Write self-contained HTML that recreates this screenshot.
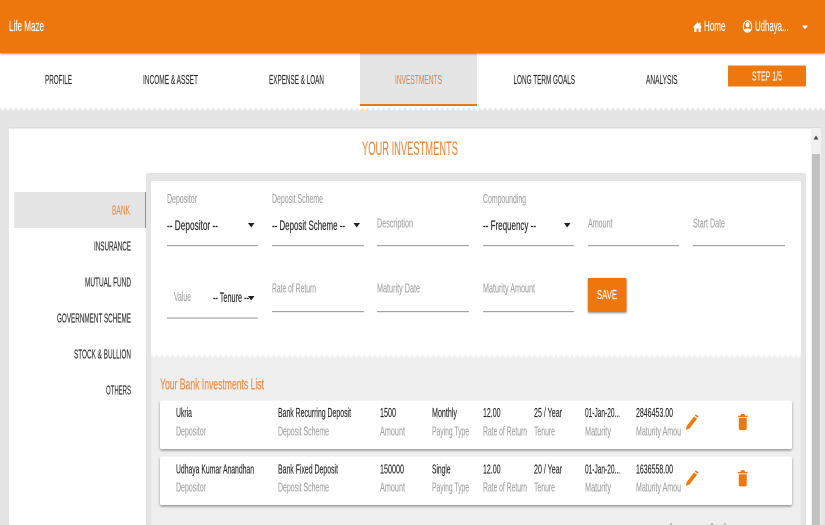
<!DOCTYPE html>
<html><head><meta charset="utf-8"><title>Life Maze</title>
<style>
html,body{margin:0;padding:0;width:825px;height:525px;overflow:hidden;background:#e5e5e5}
svg{display:block;font-family:"Liberation Sans",sans-serif}
text{font-size:12px;fill:#333}
.n{font-size:13px;fill:#2e2e2e;stroke:#2e2e2e;stroke-width:.15}
.o{fill:#f0853a;stroke:#f0853a;stroke-width:.1}
.l{fill:#a0a0a0;font-size:12.800px;stroke:#a0a0a0;stroke-width:.1}
.v{fill:#2a2a2a;font-size:12.800px;stroke:#2a2a2a;stroke-width:.15}
.s{font-size:14px}
.w{fill:#fff;stroke:#fff;stroke-width:.15}
.h{font-size:14.500px}
</style></head><body>
<svg width="825" height="525" viewBox="0 0 825 525" xmlns="http://www.w3.org/2000/svg">
<defs>
<pattern id="z" width="5.33" height="4" patternUnits="userSpaceOnUse" x="0" y="107"><path d="M0 0H5.33V.5L2.67 4 0 .5Z" fill="#fff"/></pattern>
<pattern id="z2" width="5.33" height="4" patternUnits="userSpaceOnUse" x="151" y="354"><path d="M0 0H5.33V.5L2.67 4 0 .5Z" fill="#fff"/></pattern>
<filter id="s" x="-5%" y="-20%" width="110%" height="140%"><feDropShadow dx="0" dy="1" stdDeviation="1.1" flood-color="#000" flood-opacity=".45"/></filter>
<filter id="s2" x="-5%" y="-5%" width="110%" height="130%"><feDropShadow dx="0" dy="1.5" stdDeviation="1.3" flood-color="#000" flood-opacity=".4"/></filter>
</defs>
<rect width="825" height="525" fill="#e5e5e5"/>
<!-- nav -->
<rect y="53" width="825" height="54" fill="#fff"/>
<rect y="107" width="825" height="4" fill="url(#z)"/>
<rect x="360" y="53" width="117" height="51" fill="#e5e5e5"/>
<rect x="360" y="104" width="117" height="2" fill="#ee770e"/>
<!-- header -->
<rect width="825" height="53" fill="#ee770e" filter="url(#s)"/>
<text x="9" y="31" class="w h" textLength="35" lengthAdjust="spacingAndGlyphs">Life Maze</text>
<path d="M693 27.500L697.500 22 699.200 24.200V22.800H700.500V25.800L702 27.500H700.700V32H698.500V28.500H696.500V32H694.300V27.500Z" fill="#fff"/>
<text x="704" y="31" class="w h" textLength="21.5" lengthAdjust="spacingAndGlyphs">Home</text>
<ellipse cx="747.500" cy="26.500" rx="4.200" ry="5.800" fill="none" stroke="#fff" stroke-width="1.100"/>
<ellipse cx="747.500" cy="24.800" rx="2" ry="2.500" fill="#fff"/><path d="M744 30Q747.500 26.500 751 30 747.500 33.300 744 30Z" fill="#fff"/>
<text x="755" y="31" class="w h" textLength="33.5" lengthAdjust="spacingAndGlyphs">Udhaya...</text>
<path d="M802 25.500H808L805 29.500Z" fill="#fff"/>
<!-- nav text -->
<text x="45" y="84" class="n" textLength="27" lengthAdjust="spacingAndGlyphs">PROFILE</text>
<text x="143" y="84" class="n" textLength="55" lengthAdjust="spacingAndGlyphs">INCOME &amp; ASSET</text>
<text x="269" y="84" class="n" textLength="55" lengthAdjust="spacingAndGlyphs">EXPENSE &amp; LOAN</text>
<text x="395" y="84" class="n o" textLength="47" lengthAdjust="spacingAndGlyphs">INVESTMENTS</text>
<text x="513.5" y="84" class="n" textLength="61.5" lengthAdjust="spacingAndGlyphs">LONG TERM GOALS</text>
<text x="646" y="84" class="n" textLength="31.5" lengthAdjust="spacingAndGlyphs">ANALYSIS</text>
<rect x="728" y="65.500" width="78" height="21" rx="1" fill="#ee770e"/>
<text x="752" y="80.500" class="w" style="font-size:13px" textLength="30" lengthAdjust="spacingAndGlyphs">STEP 1/5</text>
<!-- main card -->
<rect x="9" y="128" width="812" height="397" fill="#fff"/>
<path d="M9 128H821" stroke="#d8d8d8" stroke-width="1"/>
<rect x="811" y="128" width="10" height="397" fill="#f1f1f1"/>
<rect x="812" y="154" width="8" height="371" fill="#c1c1c1"/>
<path d="M813.500 139.500L816 135.500 818.500 139.500Z" fill="#505050"/>
<text x="362" y="155" class="o" style="font-size:19px" textLength="96" lengthAdjust="spacingAndGlyphs">YOUR INVESTMENTS</text>
<!-- sidebar -->
<rect x="14" y="192" width="131" height="36" fill="#e5e5e5"/>
<rect x="145" y="192" width="1" height="36" fill="#ee770e"/>
<text x="112" y="214.500" class="n o" textLength="18" lengthAdjust="spacingAndGlyphs">BANK</text>
<text x="94" y="250.500" class="n" textLength="37" lengthAdjust="spacingAndGlyphs">INSURANCE</text>
<text x="85" y="286.500" class="n" textLength="46" lengthAdjust="spacingAndGlyphs">MUTUAL FUND</text>
<text x="57" y="322.500" class="n" textLength="74" lengthAdjust="spacingAndGlyphs">GOVERNMENT SCHEME</text>
<text x="74" y="358.500" class="n" textLength="57" lengthAdjust="spacingAndGlyphs">STOCK &amp; BULLION</text>
<text x="106" y="394.500" class="n" textLength="25" lengthAdjust="spacingAndGlyphs">OTHERS</text>
<!-- panel -->
<rect x="146" y="173" width="660" height="352" fill="#e5e5e5"/>
<rect x="151" y="354" width="650" height="171" fill="#efefef"/>
<rect x="151" y="181" width="650" height="173" rx="2" fill="#fff"/>
<rect x="151" y="354" width="650" height="4" fill="url(#z2)"/>
<!-- form -->
<g fill="#a5a5a5">
<rect x="167" y="245" width="91" height="1.2"/><rect x="272" y="245" width="92" height="1.2"/><rect x="377" y="245" width="92" height="1.2"/><rect x="483" y="245" width="91" height="1.2"/><rect x="588" y="245" width="91" height="1.2"/><rect x="693" y="245" width="92" height="1.2"/>
<rect x="167" y="317.500" width="91" height="1.2"/><rect x="272" y="311" width="92" height="1.2"/><rect x="377" y="311" width="92" height="1.2"/><rect x="483" y="311" width="91" height="1.2"/>
</g>
<text x="167" y="203" class="l" textLength="30" lengthAdjust="spacingAndGlyphs">Depositor</text>
<text x="272" y="203" class="l" textLength="51" lengthAdjust="spacingAndGlyphs">Deposit Scheme</text>
<text x="483" y="203" class="l" textLength="43" lengthAdjust="spacingAndGlyphs">Compounding</text>
<text x="377" y="227.500" class="l" textLength="36" lengthAdjust="spacingAndGlyphs">Description</text>
<text x="588" y="227.500" class="l" textLength="24.500" lengthAdjust="spacingAndGlyphs">Amount</text>
<text x="693" y="227.500" class="l" textLength="32" lengthAdjust="spacingAndGlyphs">Start Date</text>
<text x="167" y="230" class="v s" textLength="51" lengthAdjust="spacingAndGlyphs">-- Depositor --</text>
<text x="272" y="230" class="v s" textLength="73" lengthAdjust="spacingAndGlyphs">-- Deposit Scheme --</text>
<text x="483" y="230" class="v s" textLength="53" lengthAdjust="spacingAndGlyphs">-- Frequency --</text>
<path d="M248 223H254.500L251.200 227.500Z" fill="#222"/>
<path d="M353.500 223H360L356.700 227.500Z" fill="#222"/>
<path d="M564 223H570.500L567.200 227.500Z" fill="#222"/>
<text x="174" y="301" class="l" textLength="17" lengthAdjust="spacingAndGlyphs">Value</text>
<text x="213" y="302" class="v s" textLength="36" lengthAdjust="spacingAndGlyphs">-- Tenure --</text>
<path d="M248 296H254.500L251.200 300.500Z" fill="#222"/>
<text x="272" y="292.500" class="l" textLength="44" lengthAdjust="spacingAndGlyphs">Rate of Return</text>
<text x="377" y="292.500" class="l" textLength="43" lengthAdjust="spacingAndGlyphs">Maturity Date</text>
<text x="483" y="292.500" class="l" textLength="52" lengthAdjust="spacingAndGlyphs">Maturity Amount</text>
<rect x="588" y="278" width="38.500" height="34" rx="1" fill="#ee770e" filter="url(#s)"/>
<text x="597" y="299" class="w" style="font-size:13px" textLength="20" lengthAdjust="spacingAndGlyphs">SAVE</text>
<!-- list -->
<text x="160" y="389.500" class="o" style="font-size:15.500px" textLength="104" lengthAdjust="spacingAndGlyphs">Your Bank Investments List</text>
<rect x="160" y="400.500" width="632" height="48.500" rx="2" fill="#fff" filter="url(#s2)"/>
<rect x="160" y="456.500" width="632" height="48.500" rx="2" fill="#fff" filter="url(#s2)"/>
<!-- row 1 -->
<text x="176" y="417" class="v" textLength="16" lengthAdjust="spacingAndGlyphs">Ukria</text>
<text x="278" y="417" class="v" textLength="73" lengthAdjust="spacingAndGlyphs">Bank Recurring Deposit</text>
<text x="380" y="417" class="v" textLength="16" lengthAdjust="spacingAndGlyphs">1500</text>
<text x="432" y="417" class="v" textLength="25" lengthAdjust="spacingAndGlyphs">Monthly</text>
<text x="483" y="417" class="v" textLength="17.500" lengthAdjust="spacingAndGlyphs">12.00</text>
<text x="534" y="417" class="v" textLength="28" lengthAdjust="spacingAndGlyphs">25 / Year</text>
<text x="585" y="417" class="v" textLength="35" lengthAdjust="spacingAndGlyphs">01-Jan-20...</text>
<text x="636" y="417" class="v" textLength="37" lengthAdjust="spacingAndGlyphs">2846453.00</text>
<text x="176" y="435.500" class="l" textLength="30" lengthAdjust="spacingAndGlyphs">Depositor</text>
<text x="278" y="435.500" class="l" textLength="51" lengthAdjust="spacingAndGlyphs">Deposit Scheme</text>
<text x="380" y="435.500" class="l" textLength="25" lengthAdjust="spacingAndGlyphs">Amount</text>
<text x="432" y="435.500" class="l" textLength="37" lengthAdjust="spacingAndGlyphs">Paying Type</text>
<text x="483" y="435.500" class="l" textLength="44" lengthAdjust="spacingAndGlyphs">Rate of Return</text>
<text x="534" y="435.500" class="l" textLength="21" lengthAdjust="spacingAndGlyphs">Tenure</text>
<text x="585" y="435.500" class="l" textLength="26" lengthAdjust="spacingAndGlyphs">Maturity</text>
<text x="636" y="435.500" class="l" textLength="45" lengthAdjust="spacingAndGlyphs">Maturity Amou</text>
<!-- row 2 -->
<text x="176" y="473.500" class="v" textLength="78" lengthAdjust="spacingAndGlyphs">Udhaya Kumar Anandhan</text>
<text x="278" y="473.500" class="v" textLength="60" lengthAdjust="spacingAndGlyphs">Bank Fixed Deposit</text>
<text x="380" y="473.500" class="v" textLength="24" lengthAdjust="spacingAndGlyphs">150000</text>
<text x="432" y="473.500" class="v" textLength="18.500" lengthAdjust="spacingAndGlyphs">Single</text>
<text x="483" y="473.500" class="v" textLength="17.500" lengthAdjust="spacingAndGlyphs">12.00</text>
<text x="534" y="473.500" class="v" textLength="28" lengthAdjust="spacingAndGlyphs">20 / Year</text>
<text x="585" y="473.500" class="v" textLength="35" lengthAdjust="spacingAndGlyphs">01-Jan-20...</text>
<text x="636" y="473.500" class="v" textLength="37" lengthAdjust="spacingAndGlyphs">1636558.00</text>
<text x="176" y="491.500" class="l" textLength="30" lengthAdjust="spacingAndGlyphs">Depositor</text>
<text x="278" y="491.500" class="l" textLength="51" lengthAdjust="spacingAndGlyphs">Deposit Scheme</text>
<text x="380" y="491.500" class="l" textLength="25" lengthAdjust="spacingAndGlyphs">Amount</text>
<text x="432" y="491.500" class="l" textLength="37" lengthAdjust="spacingAndGlyphs">Paying Type</text>
<text x="483" y="491.500" class="l" textLength="44" lengthAdjust="spacingAndGlyphs">Rate of Return</text>
<text x="534" y="491.500" class="l" textLength="21" lengthAdjust="spacingAndGlyphs">Tenure</text>
<text x="585" y="491.500" class="l" textLength="26" lengthAdjust="spacingAndGlyphs">Maturity</text>
<text x="636" y="491.500" class="l" textLength="45" lengthAdjust="spacingAndGlyphs">Maturity Amou</text>
<!-- icons -->
<g fill="#ee770e">
<path d="M686 430L686.700 426 694 416.500 697 418.800 689.700 428.300Z"/><path d="M694.800 415.500L695.800 414.200 698.600 416.400 697.600 417.700Z"/>
<path d="M686 486L686.700 482 694 472.500 697 474.800 689.700 484.300Z"/><path d="M694.800 471.500L695.800 470.200 698.600 472.400 697.600 473.700Z"/>
<path d="M738 415.700H740.500L741 414H744.500L745 415.700H747.500V417.100H738Z"/><path d="M738.800 417.900H746.700V428.800Q746.700 430 745.500 430H740Q738.800 430 738.800 428.800Z"/>
<path d="M738 472H740.500L741 470.300H744.500L745 472H747.500V473.400H738Z"/><path d="M738.800 474.200H746.700V485.200Q746.700 486.400 745.500 486.400H740Q738.800 486.400 738.800 485.200Z"/>
</g>
<g fill="#555" opacity=".45"><rect x="670" y="523.500" width="2" height="1.500"/><rect x="711" y="523.500" width="2" height="1.500"/><rect x="724" y="523.500" width="2" height="1.500"/></g>
</svg>
</body></html>
